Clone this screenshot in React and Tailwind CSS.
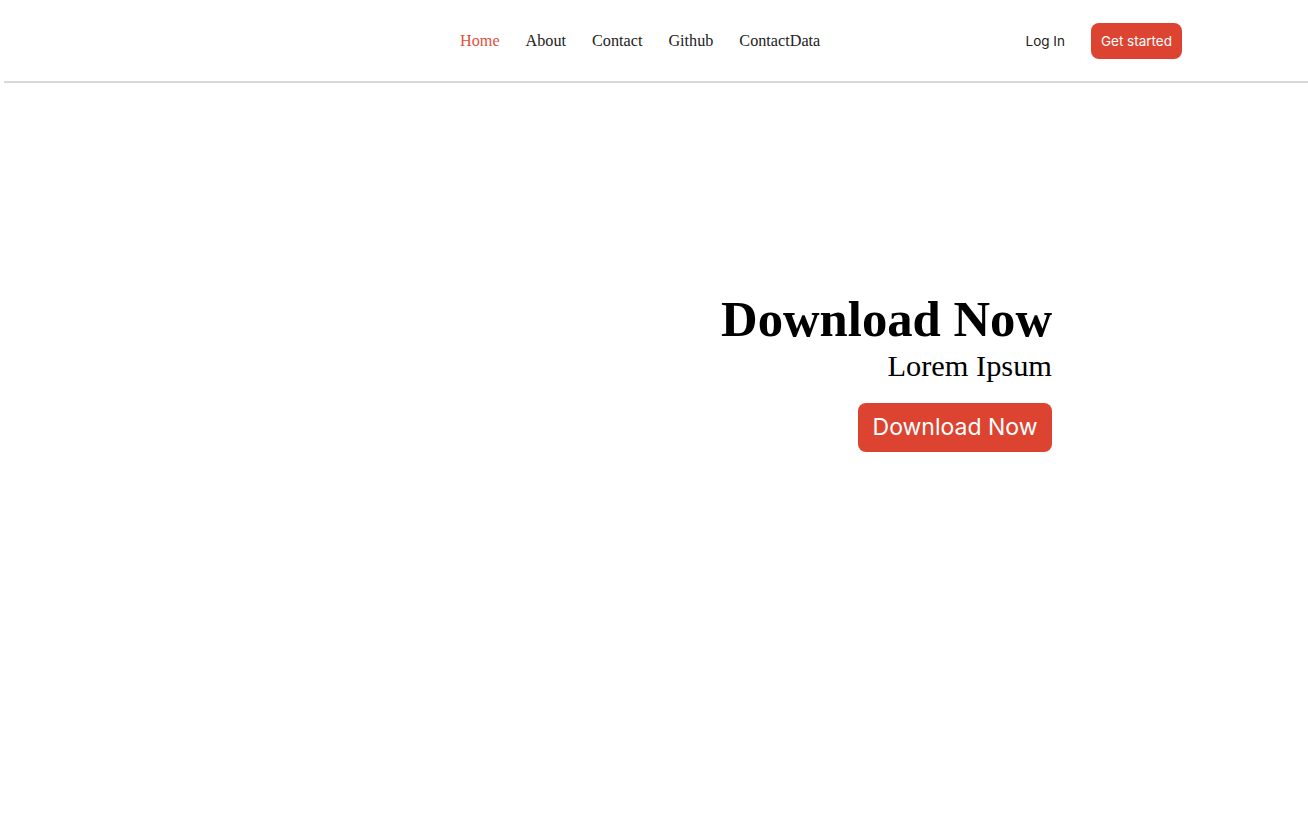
import React from 'react';

const links = ['Home', 'About', 'Contact', 'Github', 'ContactData'];

const App = () => {
    return (
        <div className="min-h-screen bg-white">
            <header className="ml-[4px] border-b-2 border-[#d9d9d9]">
                <div className="flex h-[81px] items-center pt-[1px]">
                    <nav className="ml-[456px] flex items-center gap-[26px] font-['Liberation_Serif',serif] text-[16.2px] text-[#222]">
                        {links.map((link, i) => (
                            <a
                                key={link}
                                href="#"
                                className={i === 0 ? 'text-[#e0503d]' : 'text-[#222]'}
                            >
                                {link}
                            </a>
                        ))}
                    </nav>
                    <div className="ml-auto mr-[126px] flex items-center gap-[26px] font-['Inter',sans-serif] text-[13.5px]">
                        <a href="#" className="text-[#222]">Log In</a>
                        <button className="h-[36px] rounded-lg bg-[#dc4431] px-[10px] text-white">
                            Get started
                        </button>
                    </div>
                </div>
            </header>

            <section className="flex justify-end pr-[256px] pt-[206px]">
                <div className="flex flex-col items-end">
                    <h1 className="font-['Liberation_Serif',serif] text-[50.7px] font-bold leading-[60px] text-black">
                        Download Now
                    </h1>
                    <p className="font-['Liberation_Serif',serif] text-[30.4px] leading-[34px] text-black">
                        Lorem Ipsum
                    </p>
                    <button className="mt-[20px] h-[49px] rounded-lg bg-[#dc4431] px-[14.5px] font-['Inter',sans-serif] text-[23px] text-white">
                        Download Now
                    </button>
                </div>
            </section>
        </div>
    );
};

export default App;
